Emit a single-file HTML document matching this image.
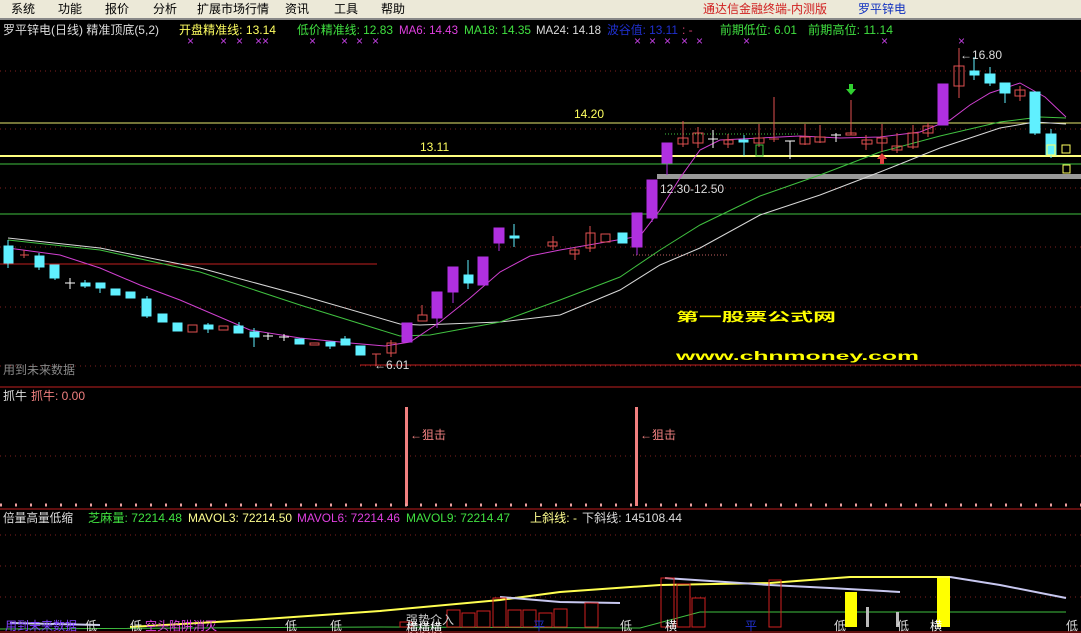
<!DOCTYPE html>
<html><head><meta charset="utf-8"><style>
html,body{margin:0;padding:0;background:#000;width:1081px;height:633px;overflow:hidden}
svg{display:block}
text{font-family:"Liberation Sans","Noto Sans CJK SC",sans-serif;font-size:12px}
</style></head><body>
<svg width="1081" height="633" viewBox="0 0 1081 633" xmlns="http://www.w3.org/2000/svg">
<rect width="1081" height="633" fill="#000"/>
<rect x="0" y="0" width="1081" height="18" fill="#ece9d8"/>
<g fill="#000">
<text x="11" y="13">系统</text><text x="58" y="13">功能</text><text x="105" y="13">报价</text><text x="153" y="13">分析</text><text x="197" y="13">扩展市场行情</text><text x="285" y="13">资讯</text><text x="334" y="13">工具</text><text x="381" y="13">帮助</text>
</g>
<text x="703" y="13" fill="#d02020">通达信金融终端-内测版</text>
<text x="858" y="13" fill="#1030c0">罗平锌电</text>
<rect x="0" y="18" width="1081" height="2" fill="#888"/>
<g font-size="12">
<text x="3" y="34" fill="#ddd" textLength="156" lengthAdjust="spacingAndGlyphs">罗平锌电(日线) 精准顶底(5,2)</text>
<text x="179" y="34" fill="#ffff60" textLength="97" lengthAdjust="spacingAndGlyphs">开盘精准线: 13.14</text>
<text x="297" y="34" fill="#40e040" textLength="96" lengthAdjust="spacingAndGlyphs">低价精准线: 12.83</text>
<text x="399" y="34" fill="#e040e0" textLength="59" lengthAdjust="spacingAndGlyphs">MA6: 14.43</text>
<text x="464" y="34" fill="#40e040" textLength="67" lengthAdjust="spacingAndGlyphs">MA18: 14.35</text>
<text x="536" y="34" fill="#ddd" textLength="65" lengthAdjust="spacingAndGlyphs">MA24: 14.18</text>
<text x="607" y="34" fill="#2030d0" textLength="71" lengthAdjust="spacingAndGlyphs">波谷值: 13.11</text>
<text x="682" y="34" fill="#d04070">: -</text>
<text x="720" y="34" fill="#40e040" textLength="77" lengthAdjust="spacingAndGlyphs">前期低位: 6.01</text>
<text x="808" y="34" fill="#40e040" textLength="85" lengthAdjust="spacingAndGlyphs">前期高位: 11.14</text>
</g>
<g fill="#c040e0" font-size="9">
<text x="187" y="45">×</text><text x="220" y="45">×</text><text x="236" y="45">×</text><text x="255" y="45">×</text><text x="262" y="45">×</text><text x="309" y="45">×</text><text x="341" y="45">×</text><text x="356" y="45">×</text><text x="372" y="45">×</text><text x="634" y="45">×</text><text x="649" y="45">×</text><text x="664" y="45">×</text><text x="681" y="45">×</text><text x="696" y="45">×</text><text x="743" y="45">×</text><text x="881" y="45">×</text><text x="958" y="45">×</text>
</g>
<g stroke="#802020" stroke-dasharray="1,4" stroke-width="1">
<line x1="0" y1="71" x2="1081" y2="71"/><line x1="0" y1="129" x2="1081" y2="129"/><line x1="0" y1="188" x2="1081" y2="188"/><line x1="0" y1="247" x2="1081" y2="247"/><line x1="0" y1="307" x2="1081" y2="307"/><line x1="0" y1="366" x2="1081" y2="366"/>
<line x1="0" y1="456" x2="1081" y2="456"/>
<line x1="0" y1="535" x2="1081" y2="535"/><line x1="0" y1="566" x2="1081" y2="566"/><line x1="0" y1="597" x2="1081" y2="597"/>
</g>
<line x1="0" y1="123" x2="1081" y2="123" stroke="#e8e870" stroke-width="1"/>
<text x="574" y="118" fill="#ffff60" font-size="11">14.20</text>
<line x1="0" y1="156" x2="1081" y2="156" stroke="#ffff80" stroke-width="2"/>
<text x="420" y="151" fill="#ffff60" font-size="11">13.11</text>
<line x1="0" y1="164" x2="1081" y2="164" stroke="#40c040" stroke-width="1"/>
<rect x="657" y="174" width="424" height="5" fill="#999"/>
<line x1="0" y1="214" x2="1081" y2="214" stroke="#40c040" stroke-width="1"/>
<line x1="0" y1="264" x2="377" y2="264" stroke="#c02020" stroke-width="1"/>
<line x1="360" y1="365" x2="1081" y2="365" stroke="#c02020" stroke-width="1"/>
<line x1="633" y1="255" x2="728" y2="255" stroke="#c06060" stroke-dasharray="1,2"/>
<line x1="665" y1="134" x2="800" y2="134" stroke="#40c040" stroke-dasharray="1,2"/>
<polyline fill="none" stroke="#d8d8d8" stroke-width="1" points="8,238 100,248 200,268 300,295 400,324 420,325 500,322 560,315 620,290 660,265 700,248 760,215 820,195 880,172 940,148 1000,128 1035,122 1066,124"/>
<polyline fill="none" stroke="#40c040" stroke-width="1" points="8,240 100,250 200,272 300,305 400,336 430,335 500,322 560,300 620,277 660,250 700,225 760,196 820,175 880,152 940,136 1000,122 1040,117 1066,118"/>
<polyline fill="none" stroke="#d040d0" stroke-width="1" points="8,248 60,255 100,268 140,285 180,300 250,330 300,338 350,343 385,346 410,342 440,322 470,298 500,272 530,256 560,250 600,243 640,236 660,210 680,178 700,150 720,140 760,138 800,136 840,138 880,137 920,132 950,120 970,105 990,93 1020,83 1045,97 1066,117"/>
<g stroke-width="1">
<g fill="#60f0ff" stroke="#60f0ff">
<rect x="4" y="246" width="9" height="17"/><line x1="8" y1="240" x2="8" y2="268"/>
<rect x="35" y="256" width="9" height="11"/><line x1="39" y1="253" x2="39" y2="270"/>
<rect x="50" y="265" width="9" height="13"/><line x1="55" y1="265" x2="55" y2="280"/>
<rect x="81" y="283" width="9" height="3"/><line x1="85" y1="280" x2="85" y2="288"/>
<rect x="96" y="283" width="9" height="5"/><line x1="100" y1="283" x2="100" y2="293"/>
<rect x="111" y="289" width="9" height="6"/>
<rect x="126" y="292" width="9" height="6"/>
<rect x="142" y="299" width="9" height="17"/><line x1="147" y1="296" x2="147" y2="318"/>
<rect x="158" y="314" width="9" height="8"/>
<rect x="173" y="323" width="9" height="8"/>
<rect x="204" y="325" width="9" height="4"/><line x1="208" y1="323" x2="208" y2="333"/>
<rect x="234" y="326" width="9" height="7"/><line x1="239" y1="322" x2="239" y2="333"/>
<rect x="250" y="332" width="9" height="5"/><line x1="254" y1="328" x2="254" y2="347"/>
<rect x="295" y="339" width="9" height="5"/>
<rect x="326" y="342" width="9" height="4"/><line x1="330" y1="342" x2="330" y2="349"/>
<rect x="341" y="339" width="9" height="6"/><line x1="345" y1="336" x2="345" y2="345"/>
<rect x="356" y="346" width="9" height="9"/>
<rect x="464" y="275" width="9" height="8"/><line x1="468" y1="260" x2="468" y2="289"/>
<rect x="510" y="236" width="9" height="2"/><line x1="514" y1="224" x2="514" y2="247"/>
<rect x="618" y="233" width="9" height="10"/>
<rect x="739" y="140" width="9" height="2"/><line x1="744" y1="135" x2="744" y2="156"/>
<rect x="970" y="71" width="9" height="4"/><line x1="974" y1="57" x2="974" y2="80"/>
<rect x="985" y="74" width="10" height="9"/><line x1="990" y1="67" x2="990" y2="86"/>
<rect x="1000" y="83" width="10" height="10"/><line x1="1005" y1="83" x2="1005" y2="103"/>
<rect x="1030" y="92" width="10" height="41"/><line x1="1035" y1="92" x2="1035" y2="135"/>
<rect x="1046" y="134" width="10" height="21"/><line x1="1051" y1="129" x2="1051" y2="158"/>
</g>
<g fill="none" stroke="#e05050">
<line x1="20" y1="255" x2="29" y2="255"/><line x1="24" y1="250" x2="24" y2="258"/>
<rect x="188" y="325" width="9" height="7"/>
<rect x="219" y="326" width="9" height="4"/>
<rect x="310" y="343" width="9" height="2"/>
<line x1="372" y1="354" x2="381" y2="354"/><line x1="376" y1="354" x2="376" y2="366"/>
<rect x="387" y="343" width="9" height="10"/><line x1="391" y1="340" x2="391" y2="357"/>
<rect x="418" y="315" width="9" height="6"/><line x1="422" y1="305" x2="422" y2="315"/>
<rect x="548" y="242" width="9" height="4"/><line x1="553" y1="236" x2="553" y2="250"/>
<rect x="570" y="250" width="9" height="4"/><line x1="575" y1="247" x2="575" y2="260"/>
<rect x="586" y="233" width="9" height="15"/><line x1="590" y1="226" x2="590" y2="252"/>
<rect x="601" y="234" width="9" height="8"/>
<rect x="678" y="138" width="10" height="6"/><line x1="683" y1="121" x2="683" y2="147"/>
<rect x="693" y="133" width="10" height="10"/><line x1="698" y1="127" x2="698" y2="148"/>
<rect x="724" y="140" width="9" height="4"/><line x1="728" y1="134" x2="728" y2="148"/>
<rect x="754" y="138" width="10" height="5"/><line x1="759" y1="124" x2="759" y2="147"/>
<line x1="774" y1="97" x2="774" y2="142"/><line x1="769" y1="139" x2="779" y2="139"/>
<rect x="800" y="137" width="10" height="7"/><line x1="805" y1="124" x2="805" y2="145"/>
<rect x="815" y="137" width="10" height="5"/><line x1="820" y1="125" x2="820" y2="143"/>
<rect x="846" y="133" width="10" height="2"/><line x1="851" y1="100" x2="851" y2="135"/>
<rect x="862" y="140" width="10" height="4"/><line x1="866" y1="135" x2="866" y2="150"/>
<rect x="877" y="138" width="10" height="5"/><line x1="882" y1="124" x2="882" y2="152"/>
<rect x="892" y="146" width="10" height="4"/><line x1="897" y1="133" x2="897" y2="153"/>
<rect x="908" y="133" width="10" height="14"/><line x1="913" y1="125" x2="913" y2="149"/>
<rect x="923" y="126" width="10" height="7"/><line x1="928" y1="123" x2="928" y2="137"/>
<rect x="954" y="66" width="10" height="20"/><line x1="959" y1="48" x2="959" y2="98"/>
<rect x="1015" y="90" width="10" height="6"/><line x1="1020" y1="86" x2="1020" y2="101"/>
</g>
<g fill="#b030e0" stroke="#b030e0">
<rect x="402" y="323" width="10" height="19"/>
<rect x="432" y="292" width="10" height="26"/><line x1="437" y1="318" x2="437" y2="328"/>
<rect x="448" y="267" width="10" height="25"/><line x1="453" y1="292" x2="453" y2="303"/>
<rect x="478" y="257" width="10" height="28"/>
<rect x="494" y="228" width="10" height="15"/><line x1="499" y1="243" x2="499" y2="251"/>
<rect x="632" y="213" width="10" height="34"/><line x1="637" y1="247" x2="637" y2="255"/>
<rect x="647" y="180" width="10" height="38"/><line x1="652" y1="218" x2="652" y2="222"/>
<rect x="662" y="143" width="10" height="20"/><line x1="667" y1="163" x2="667" y2="175"/>
<rect x="938" y="84" width="10" height="41"/>
</g>
<g stroke="#fff">
<line x1="65" y1="283" x2="75" y2="283"/><line x1="70" y1="278" x2="70" y2="289"/>
<line x1="263" y1="336" x2="273" y2="336"/><line x1="268" y1="333" x2="268" y2="340"/>
<line x1="279" y1="337" x2="289" y2="337"/><line x1="284" y1="334" x2="284" y2="341"/>
<line x1="708" y1="139" x2="718" y2="139"/><line x1="713" y1="130" x2="713" y2="148"/>
<line x1="785" y1="141" x2="795" y2="141"/><line x1="790" y1="141" x2="790" y2="159"/>
<line x1="831" y1="135" x2="841" y2="135"/><line x1="836" y1="133" x2="836" y2="142"/>
</g>
<rect x="756" y="145" width="7" height="11" fill="none" stroke="#40c040"/>
<g fill="none" stroke="#ffff60">
<rect x="1047" y="145" width="8" height="10"/>
<rect x="1062" y="145" width="8" height="8"/>
<rect x="1063" y="165" width="7" height="8"/>
</g>
</g>
<path d="M846,89 h3 v-5 h4 v5 h3 l-5,6 z" fill="#30d030"/>
<path d="M877,159 l5,-6 l5,6 h-3 v5 h-4 v-5 z" fill="#e04040"/>
<text x="660" y="193" fill="#ddd" font-size="12">12.30-12.50</text>
<text x="960" y="59" fill="#ddd" font-size="12">←16.80</text>
<text x="374" y="369" fill="#ddd" font-size="11">←6.01</text>
<text x="3" y="374" fill="#888" font-size="12">用到未来数据</text>
<text x="676" y="321" fill="#ffff00" font-size="24" font-weight="bold" textLength="160" lengthAdjust="spacingAndGlyphs">第一股票公式网</text>
<text x="676" y="360" fill="#ffff00" font-size="22" font-weight="bold" textLength="243" lengthAdjust="spacingAndGlyphs">www.chnmoney.com</text>
<line x1="0" y1="387" x2="1081" y2="387" stroke="#c02020"/>
<text x="3" y="400" fill="#ddd">抓牛</text>
<text x="31" y="400" fill="#f08080">抓牛: 0.00</text>
<rect x="405" y="407" width="3" height="99" fill="#f08080"/>
<rect x="635" y="407" width="3" height="99" fill="#f08080"/>
<text x="410" y="439" fill="#f08080">←狙击</text>
<text x="640" y="439" fill="#f08080">←狙击</text>
<line x1="0" y1="505" x2="1081" y2="505" stroke="#f0a0a0" stroke-dasharray="2,13" stroke-width="3"/>
<line x1="0" y1="509" x2="1081" y2="509" stroke="#c02020"/>
<text x="3" y="522" fill="#ddd" textLength="70" lengthAdjust="spacingAndGlyphs">倍量高量低缩</text>
<text x="88" y="522" fill="#40e040" textLength="94" lengthAdjust="spacingAndGlyphs">芝麻量: 72214.48</text>
<text x="188" y="522" fill="#ffff90" textLength="104" lengthAdjust="spacingAndGlyphs">MAVOL3: 72214.50</text>
<text x="297" y="522" fill="#e040e0" textLength="103" lengthAdjust="spacingAndGlyphs">MAVOL6: 72214.46</text>
<text x="406" y="522" fill="#40e040" textLength="104" lengthAdjust="spacingAndGlyphs">MAVOL9: 72214.47</text>
<text x="530" y="522" fill="#ffff90" textLength="47" lengthAdjust="spacingAndGlyphs">上斜线: -</text>
<text x="582" y="522" fill="#ddd" textLength="100" lengthAdjust="spacingAndGlyphs">下斜线: 145108.44</text>
<polyline fill="none" stroke="#ffff50" stroke-width="2" points="130,627 250,620 380,611 500,600 560,592 660,585 770,583 850,577 920,577 950,577"/>
<polyline fill="none" stroke="#c8c8f0" stroke-width="2" points="950,577 1000,585 1066,598"/>
<polyline fill="none" stroke="#c8c8f0" stroke-width="2" points="500,597 560,602 620,603"/>
<polyline fill="none" stroke="#c8c8f0" stroke-width="2" points="665,578 770,585 830,588 900,592"/>
<polyline fill="none" stroke="#c8c8f0" stroke-width="2" points="10,623 100,625"/>
<polyline fill="none" stroke="#40c040" stroke-width="1" points="0,629 380,627 640,628 700,612 1066,612"/>
<g fill="none" stroke="#d02020">
<rect x="447" y="610" width="13" height="17"/><rect x="462" y="613" width="13" height="14"/><rect x="477" y="611" width="13" height="16"/><rect x="493" y="598" width="13" height="29"/><rect x="508" y="610" width="13" height="17"/><rect x="523" y="610" width="13" height="17"/><rect x="539" y="613" width="13" height="14"/><rect x="554" y="609" width="13" height="18"/><rect x="585" y="603" width="13" height="24"/><rect x="661" y="578" width="13" height="49"/><rect x="677" y="584" width="13" height="43"/><rect x="692" y="598" width="13" height="29"/><rect x="769" y="580" width="12" height="47"/><rect x="400" y="622" width="12" height="5"/>
</g>
<rect x="845" y="592" width="12" height="35" fill="#ffff00"/>
<rect x="937" y="578" width="13" height="49" fill="#ffff00"/>
<rect x="866" y="607" width="3" height="20" fill="#bbb"/>
<rect x="896" y="612" width="3" height="15" fill="#bbb"/>
<g font-size="11">
<text x="5" y="630" fill="#8040ff">用到未来数据</text>
<text x="85" y="630" fill="#ddd">低</text>
<text x="130" y="630" fill="#ddd">低</text>
<text x="145" y="630" fill="#e040e0">空头陷阱消灭</text>
<text x="285" y="630" fill="#ddd">低</text>
<text x="330" y="630" fill="#ddd">低</text>
<text x="406" y="624" fill="#ccc">强势介入</text>
<text x="406" y="632" fill="#fff">横横横</text>
<text x="533" y="630" fill="#2030d0">平</text>
<text x="620" y="630" fill="#ddd">低</text>
<text x="665" y="630" fill="#fff">横</text>
<text x="745" y="630" fill="#2030d0">平</text>
<text x="834" y="630" fill="#ddd">低</text>
<text x="897" y="630" fill="#ddd">低</text>
<text x="930" y="630" fill="#fff">横</text>
<text x="1066" y="630" fill="#ddd">低</text>
</g>
<line x1="0" y1="632" x2="1081" y2="632" stroke="#c02020"/>
</svg>
</body></html>
